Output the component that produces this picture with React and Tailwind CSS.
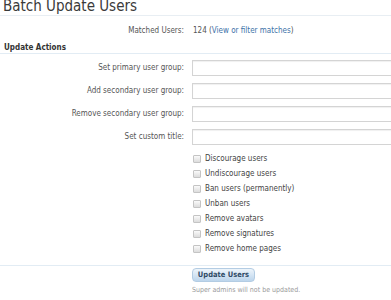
import React from 'react';

const fields = [
  'Set primary user group:',
  'Add secondary user group:',
  'Remove secondary user group:',
  'Set custom title:',
];

const checks = [
  'Discourage users',
  'Undiscourage users',
  'Ban users (permanently)',
  'Unban users',
  'Remove avatars',
  'Remove signatures',
  'Remove home pages',
];

const App = () => {
  return (
    <div className="w-[391px] h-[300px] overflow-hidden bg-white text-[#444] font-['DejaVu_Sans_Condensed','DejaVu_Sans',sans-serif]">
      <h1 className="h-[17px] pl-[3px] border-b border-[#e8eef3] text-[15px] leading-[14px] -mt-[1px] text-[#3a3a3a]">
        Batch Update Users
      </h1>

      <div className="flex items-center h-[27px] pt-[2px] text-[8px]">
        <div className="w-[184px] text-right text-[#555]">Matched Users:</div>
        <div className="pl-[9px] text-[#555]">
          124 (<a className="text-[#3d72a8]">View or filter matches</a>)
        </div>
      </div>

      <div className="h-[11px] pl-[4px] border-b border-[#e2ecf4] text-[8px] font-bold leading-[10px] text-[#333]">
        Update Actions
      </div>

      <div className="flex flex-col gap-[7px] pt-[6px]">
        {fields.map((f) => (
          <div key={f} className="flex items-center gap-[8px]">
            <label className="w-[184px] text-right text-[8px] text-[#555]">{f}</label>
            <div className="flex-1 h-[16px] border border-[#d4d4d4] border-r-0 bg-white shadow-[inset_0_1px_1px_#f0f0f0]" />
          </div>
        ))}
      </div>

      <div className="flex flex-col pt-[6px] pl-[193px]">
        {checks.map((c) => (
          <div key={c} className="flex items-center h-[15px] gap-[4px] text-[8px] text-[#444]">
            <span className="w-[8px] h-[8px] rounded-[1px] border border-[#c4c4c4] bg-gradient-to-b from-[#fafafa] to-[#dcdcdc]" />
            <span>{c}</span>
          </div>
        ))}
      </div>

      <div className="mt-[9px] border-t border-[#e2ecf4] pl-[192px] pt-[2px] flex flex-col items-start">
        <button className="w-[63px] h-[14px] rounded-[4px] border border-[#b3cce3] bg-gradient-to-b from-[#eef5fb] to-[#bcd5ec] text-[7.5px] font-bold text-[#2f4b66] leading-none">
          Update Users
        </button>
        <div className="mt-[3px] text-[7px] leading-[10px] text-[#9a9a9a]">Super admins will not be updated.</div>
      </div>
    </div>
  );
};

export default App;
